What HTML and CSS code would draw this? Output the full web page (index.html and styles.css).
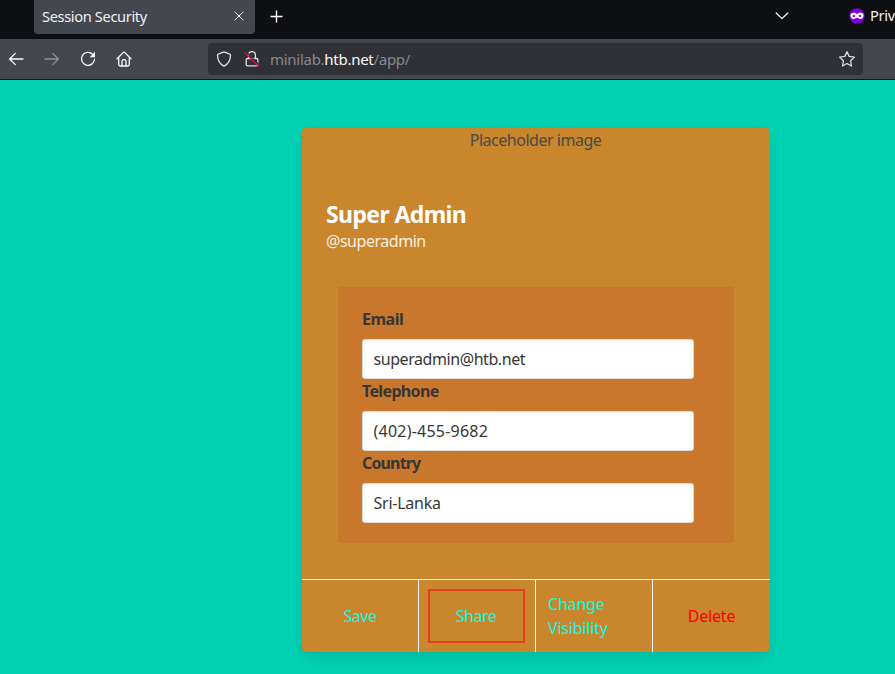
FILE: index.html
```html
<!DOCTYPE html>
<html lang="en">
<head>
<meta charset="utf-8">
<title>Session Security</title>
<link rel="stylesheet" href="styles.css">
</head>
<body>
<header class="tabs">
  <div class="tab"><span class="tab-title">Session Security</span>
    <svg class="close" width="10" height="10" viewBox="0 0 10 10"><path d="M1 1l8 8M9 1L1 9"/></svg>
  </div>
  <svg class="plus" width="14" height="14" viewBox="0 0 14 14"><path d="M6.5 1.5v12M.5 7.5h12"/></svg>
  <svg class="chevron" width="14" height="8" viewBox="0 0 14 8"><path d="M1.2 1L7 6.6L12.8 1"/></svg>
  <div class="private">
    <svg width="16" height="16" viewBox="0 0 16 16"><circle cx="8" cy="8" r="7.7" fill="#8000d7"/><path d="M8 6.2C6.7 4.9 5.2 4.8 3.8 4.9C2 5 1.4 6 1.5 7.6C1.6 9.7 2.7 11 4.4 11C6.3 11 6.7 9.8 8 9.8S9.7 11 11.6 11C13.3 11 14.4 9.7 14.5 7.6C14.6 6 14 5 12.2 4.9C10.8 4.8 9.3 4.9 8 6.2z" fill="#fff"/><ellipse cx="5" cy="8" rx="1.4" ry="1.1" fill="#8000d7"/><ellipse cx="11" cy="8" rx="1.4" ry="1.1" fill="#8000d7"/></svg>
    <span class="private-label">Priv</span>
  </div>
</header>
<nav class="toolbar">
  <svg class="nav-icon back" width="16" height="16" viewBox="0 0 16 16"><path d="M15 8H1.5M7.3 2.4L1.6 8l5.7 5.6"/></svg>
  <svg class="nav-icon forward" width="16" height="16" viewBox="0 0 16 16"><path d="M1 8h13.5M8.7 2.4L14.4 8l-5.7 5.6"/></svg>
  <svg class="nav-icon reload" width="16" height="16" viewBox="0 0 16 16"><path d="M12.6 3.2A6.5 6.5 0 1 0 14.5 8.2"/><path class="solid" d="M15 .8V6.2H9.6z"/></svg>
  <svg class="nav-icon home" width="16" height="16" viewBox="0 0 16 16"><path d="M1 7.8L7.2 1.6Q8 .9 8.8 1.6L15 7.8M2.7 6.5V13.3Q2.7 15 4.4 15H11.6Q13.3 15 13.3 13.3V6.5M6 15V10.2Q6 8.7 8 8.7T10 10.2V15"/></svg>
  <div class="urlbar">
    <svg class="shield" width="16" height="16" viewBox="0 0 16 16"><path d="M8 .9L13.8 3.1Q14.6 3.5 14.5 4.4C14.3 9.3 12.5 13 8 15.2C3.5 13 1.7 9.3 1.5 4.4Q1.4 3.5 2.2 3.1z"/></svg>
    <svg class="lock" width="16" height="16" viewBox="0 0 16 16"><path d="M4.6 7.5V4A3.4 3.4 0 0 1 11.4 4V7.5M3.4 7.5H12.6Q13.8 7.5 13.8 8.7V13.5Q13.8 14.9 12.4 14.9H3.6Q2.2 14.9 2.2 13.5V8.7Q2.2 7.5 3.4 7.5z"/><path class="slash-gap" d="M2.6 1.2L15.2 13.8"/><path class="slash" d="M1.2 2L14.4 15.2"/></svg>
    <span class="url">minilab.<b>htb.net</b>/app/</span>
    <svg class="star" width="18" height="18" viewBox="0 0 18 18"><path d="M9 1.7L11.2 6.4L16.4 7.1L12.6 10.8L13.5 16L9 13.5L4.5 16L5.4 10.8L1.6 7.1L6.8 6.4z"/></svg>
  </div>
</nav>
<main class="page">
  <article class="card">
    <div class="card-image">Placeholder image</div>
    <div class="identity">
      <h1>Super Admin</h1>
      <p>@superadmin</p>
    </div>
    <form class="box">
      <label for="email">Email</label>
      <input id="email" type="text" value="superadmin@htb.net">
      <label class="l-phone" for="phone">Telephone</label>
      <input class="i-phone" id="phone" type="text" value="(402)-455-9682">
      <label class="l-country" for="country">Country</label>
      <input class="i-country" id="country" type="text" value="Sri-Lanka">
    </form>
    <footer class="actions">
      <a>Save</a>
      <a class="share"><span class="marker">Share</span></a>
      <a class="visibility">Change Visibility</a>
      <a class="delete">Delete</a>
    </footer>
  </article>
</main>
</body>
</html>
```
FILE: styles.css
```css
* { box-sizing: border-box; }
body { margin: 0; height: 674px; overflow: hidden; background: #00d1b2; color: #4a4a4a; font: 16px/24px "Noto Sans", "Open Sans", sans-serif; }
svg { display: block; flex: none; fill: none; stroke: #fbfbfe; stroke-width: 1.4; stroke-linecap: round; stroke-linejoin: round; }

.tabs { display: flex; height: 39px; background: #0e0f13; overflow: hidden; }
.tab { display: flex; align-items: center; justify-content: space-between; flex: none; width: 221px; height: 34px; margin-left: 34px; padding: 0 11px 0 8px; border-radius: 0 0 4px 4px; background: #45474e; }
.tab-title { margin-top: -2px; font-size: 14.67px; letter-spacing: -.38px; color: #f0f0f2; white-space: nowrap; }
.close { stroke-width: 1; margin-top: -2px; }
.plus { margin: 9px 0 0 15px; stroke-linecap: butt; stroke-width: 1.4; }
.chevron { margin: 12px 0 0 491px; stroke-width: 1.3; }
.private { display: flex; flex: none; margin: 0 0 0 60px; height: 32px; align-items: center; gap: 5px; color: #f0f0f2; font-size: 14.67px; white-space: nowrap; }
.private svg { stroke: none; }
.private-label { margin-top: -2px; letter-spacing: -.35px; }

.toolbar { display: flex; align-items: center; height: 41px; padding: 0 0 0 8px; border-bottom: 1px solid #111216; background: #45474e; }
.nav-icon { stroke-width: 1.3; }
.forward { margin-left: 20px; opacity: .4; }
.reload { margin-left: 20px; }
.reload .solid { fill: #fbfbfe; stroke: none; }
.home { margin-left: 19.5px; }
.urlbar { display: flex; align-items: center; flex: none; width: 655px; height: 32px; margin: -1px 0 0 76.5px; padding: 0 7px 0 8px; border-radius: 4px; background: #303136; }
.urlbar svg { stroke: #dedee1; stroke-width: 1.3; }
.lock { margin-left: 12px; }
.urlbar .slash-gap { stroke: #303136; }
.urlbar .slash { stroke: #e20d3c; }
.url { margin-left: 10px; color: #87888d; white-space: nowrap; font-size: 15px; letter-spacing: -.28px; }
.url b { font-weight: 400; color: #fbfbfe; }
.star { margin-left: auto; }

.page { padding: 48px 125px 0 302px; }
.card { display: flex; flex-direction: column; height: 524px; border-radius: 4px; background: #c9862c; box-shadow: 0 8px 16px -2px rgba(10,10,10,.1), 0 0 0 1px rgba(10,10,10,.02); }
.card-image { height: 48px; padding-right: 1px; text-align: center; letter-spacing: -.48px; }
.identity { padding: 24px; height: 111px; }
h1 { margin: 0; padding-top: 1px; font-size: 23px; line-height: 27px; font-weight: 700; letter-spacing: -.62px; color: #fff; }
.identity p { margin: 1px 0 0; line-height: 24px; letter-spacing: -.47px; color: #f7eee0; }
.box { display: flex; flex-direction: column; align-items: flex-start; height: 256px; margin: 0 36px; padding: 20px 24px; border-radius: 4px; background: #c9772c; }
label { height: 24px; font-weight: 700; letter-spacing: -.5px; color: #363636; margin-bottom: 8px; }
.l-phone { letter-spacing: -.65px; }
.l-country { letter-spacing: -.85px; }
input { width: 332px; height: 40px; padding: 0 11px 0 10.5px; border: 1px solid #dbdbdb; border-radius: 3px; background: #fff; box-shadow: inset 0 1px 2px rgba(10,10,10,.05); font: inherit; color: #363636; letter-spacing: -.43px; }
.i-phone { letter-spacing: .22px; }
.i-country { letter-spacing: -.25px; }
.actions { display: grid; grid-template-columns: repeat(4, minmax(0, 1fr)); height: 73px; margin-top: auto; border-top: 1px solid #f5f5f5; }
.actions a { display: flex; align-items: center; justify-content: center; padding: 0 12px; border-right: 1px solid #f5f5f5; color: #0ff7e6; letter-spacing: -.45px; }
.actions .visibility { letter-spacing: -.2px; }
.actions .delete { border: 0; color: #f00; letter-spacing: -.2px; }
.share .marker { display: flex; align-items: center; justify-content: center; flex: none; width: 97px; height: 54px; margin-right: 2px; border: 2px solid #e6401a; border-radius: 1px; }
```
